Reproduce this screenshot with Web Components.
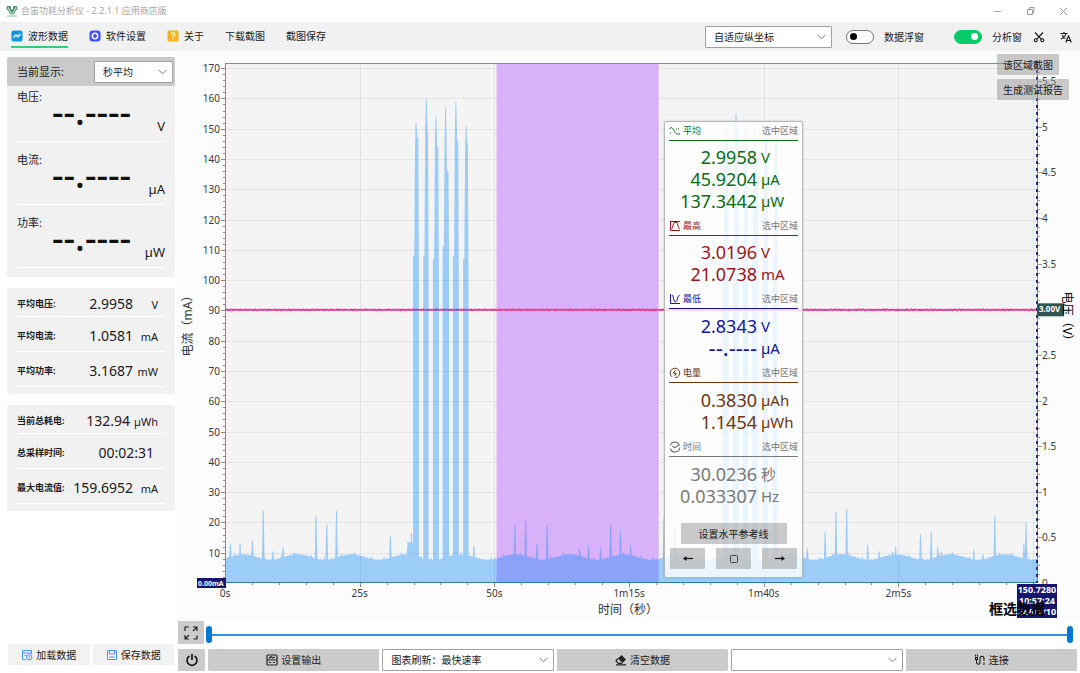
<!DOCTYPE html>
<html lang="zh-CN">
<head>
<meta charset="utf-8">
<title>合宙功耗分析仪</title>
<style>
  body { margin: 0; background: #fff; color: #1a1a1a; font: 10px/14px "Noto Sans", "Noto Sans CJK SC", sans-serif; }
</style>
</head>
<body>
<power-app></power-app>

<script>
const define = (name, html, setup) => {
  const tpl = document.createElement('template');
  tpl.innerHTML = html;
  customElements.define(name, class extends HTMLElement {
    connectedCallback() {
      if (this.shadowRoot) return;
      this.attachShadow({ mode: 'open' }).append(tpl.content.cloneNode(true));
      if (setup) setup(this, this.shadowRoot);
    }
  });
};

/* ---------- basic controls ---------- */

define('flat-button', `
<style>
  :host { display: block; }
  button { display: flex; align-items: center; justify-content: center; gap: 3px; width: 100%; height: 100%; min-height: 21px;
    box-sizing: border-box; margin: 0; padding: var(--pad, 0); border: 0; border-radius: 1px; background: var(--fill, #cbcbcb); color: inherit; font: inherit; white-space: nowrap; }
</style>
<button type="button"><slot></slot></button>`, (el, root) => {
  if (el.getAttribute('label')) root.querySelector('button').setAttribute('aria-label', el.getAttribute('label'));
});

define('drop-down', `
<style>
  :host { display: grid; min-width: 0; }
  select { grid-area: 1/1; appearance: none; width: 100%; height: 22px; box-sizing: border-box; margin: 0; padding: 0 24px 0 8px;
    border: 1px solid #a0a0a0; border-radius: 1px; background: #fff; color: inherit; font: inherit; }
  svg { grid-area: 1/1; align-self: center; justify-self: end; margin-right: 6px; pointer-events: none; }
</style>
<select></select>
<svg width="9" height="6" viewBox="0 0 9 6" fill="none" stroke="#777" stroke-width="1"><path d="M.5 .8 4.500 4.800 8.500 .8"/></svg>`, (el, root) => {
  const s = root.querySelector('select');
  s.setAttribute('aria-label', el.getAttribute('label'));
  s.add(new Option(el.getAttribute('value') || ''));
});

define('toggle-switch', `
<style>
  :host { display: block; }
  label { display: flex; align-items: center; gap: 10px; }
  input { appearance: none; display: flex; align-items: center; width: 28px; height: 14px; box-sizing: border-box; margin: 0; padding: 0 3px;
    border: 1px solid #777; border-radius: 7px; background: #fafafa; }
  input::before { content: ""; width: 7px; height: 7px; border-radius: 50%; background: #000; }
  input:checked { justify-content: flex-end; border-color: #07cb69; background: #07cb69; }
  input:checked::before { background: #fff; }
</style>
<label><input type="checkbox" role="switch"><slot></slot></label>`, (el, root) => {
  root.querySelector('input').checked = el.hasAttribute('on');
});

define('range-slider', `
<style>
  :host { display: grid; align-items: center; background: linear-gradient(#2f8fe0, #2f8fe0) center / calc(100% - 6px) 2px no-repeat; }
  input { grid-area: 1/1; appearance: none; width: 100%; height: 17px; margin: 0; background: none; pointer-events: none; }
  input::-webkit-slider-thumb { appearance: none; width: 6px; height: 17px; border-radius: 3px; background: #0078d7; pointer-events: auto; }
</style>
<input type="range" aria-label="起始" min="0" max="100" value="0">
<input type="range" aria-label="结束" min="0" max="100" value="100">`);

/* ---------- window frame ---------- */

define('window-bar', `
<style>
  :host { display: flex; align-items: center; height: 22px; padding: 0 12px 0 6px; background: #fff; color: #a6a6a6; font-size: 9px; }
  .logo { margin-right: 3px; }
  .caps { display: flex; gap: 24px; margin-left: auto; }
  .caps button { display: block; width: 9px; height: 9px; padding: 0; border: 0; background: none; }
  .caps svg { display: block; }
</style>
<svg class="logo" width="12" height="12" viewBox="0 0 12 12"><path d="M1 1.500h3.500v2L6 6.500 7.500 3.500v-2H11v3H9.800L8 8.800H4L2.200 4.500H1z" fill="#b9d5c6" stroke="#3f8f66" stroke-width=".9"/><path d="M3 1.500 6 7 9 2" fill="none" stroke="#20774a"/><path d="M1 11h10" stroke="#7fbd9d" stroke-width="1"/></svg>
<span>合宙功耗分析仪 - 2.2.1.1 应用商店版</span>
<div class="caps">
  <button aria-label="最小化"><svg width="9" height="9" fill="none" stroke="#aaa"><path d="M1 4.500h7"/></svg></button>
  <button aria-label="还原"><svg width="9" height="9" fill="none" stroke="#999"><path d="M1.500 2.500h5v5h-5zM3.500 2V.5h4.500v5H7"/></svg></button>
  <button aria-label="关闭"><svg width="9" height="9" fill="none" stroke="#999"><path d="m1 1 7 7M8 1 1 8"/></svg></button>
</div>`);

define('tool-bar', `
<style>
  :host { display: flex; align-items: center; justify-content: space-between; height: 29px; padding: 0 8px 0 11px; background: #f1f1f1; }
  nav { display: flex; gap: 21px; }
  nav button { display: flex; align-items: center; gap: 5px; height: 22px; padding: 0; border: 0; border-bottom: 2px solid transparent; background: none; color: inherit; font: inherit; }
  nav .on { border-color: #2fd07a; }
  .right { display: flex; align-items: center; }
  drop-down { width: 127px; margin-right: 14px; }
  toggle-switch + toggle-switch { margin: 0 11px 0 30px; }
  .icon { width: 12px; height: 12px; padding: 0; border: 0; background: none; }
  .icon + .icon { margin-left: 15px; }
  svg { display: block; }
</style>
<nav>
  <button class="on"><svg width="12" height="12" viewBox="0 0 12 12"><rect x=".5" y=".5" width="11" height="11" rx="2" fill="#1296db"/><path d="M2.500 7.500 5 5l1.800 1.800L9.500 4" fill="none" stroke="#fff" stroke-width="1.300"/></svg>波形数据</button>
  <button><svg width="12" height="12" viewBox="0 0 12 12"><rect x=".5" y=".5" width="11" height="11" rx="3" fill="#3d4ff5"/><circle cx="6" cy="6" r="2.700" fill="none" stroke="#fff" stroke-width="1.500"/></svg>软件设置</button>
  <button><svg width="12" height="12" viewBox="0 0 12 12"><rect x=".5" y=".5" width="11" height="11" rx="1" fill="#f3b31c"/><path d="M4.300 4.600c0-2.300 3.500-2.200 3.500-.1C7.800 5.800 6 5.700 6 7.200M6 8.300v1.200" fill="none" stroke="#fff" stroke-width="1.200"/></svg>关于</button>
  <button>下载截图</button>
  <button>截图保存</button>
</nav>
<div class="right">
  <drop-down label="纵坐标" value="自适应纵坐标"></drop-down>
  <toggle-switch>数据浮窗</toggle-switch>
  <toggle-switch on>分析窗</toggle-switch>
  <button class="icon" aria-label="截屏"><svg width="12" height="12" viewBox="0 0 12 12" fill="none" stroke="#111" stroke-width="1.100"><path d="M2 1.500 8.300 8.200M10 1.500 3.700 8.200"/><circle cx="2.700" cy="9.300" r="1.500"/><circle cx="9.300" cy="9.300" r="1.500"/></svg></button>
  <button class="icon" aria-label="语言"><svg width="12" height="12" viewBox="0 0 12 12" fill="none" stroke="#111" stroke-width="1.100"><path d="M.5 2.500h7M4 1v1.500M6 2.500C5.500 5 3.500 7 .8 8M2 4c.8 1.800 2 3 3.500 3.600M5.800 11.500 8.500 5l2.800 6.500M6.700 9.500h3.700"/></svg></button>
</div>`);

/* ---------- left column ---------- */

define('live-reading', `
<style>
  :host { display: flex; flex-direction: column; height: 55px; border-bottom: 1px solid #fff; font-size: 11px; }
  .name { line-height: 22px; }
  .line { display: flex; justify-content: space-between; padding-left: 35px; }
  .value { height: 8px; font-size: 36px; font-weight: 500; line-height: 8px; color: #111; }
  .unit { padding-top: 7px; font-size: 13px; line-height: 22px; }
</style>
<span class="name"><slot></slot>:</span>
<div class="line"><span class="value">--.----</span><span class="unit"></span></div>`, (el, root) => {
  root.querySelector('.unit').textContent = el.getAttribute('unit');
});

define('stat-row', `
<style>
  :host { display: flex; align-items: center; box-sizing: border-box; height: 35px; padding: 3px 7px 0 0; border-bottom: 1px solid #fff; }
  :host(:first-child) { height: 29px; }
  .name { font-size: 9px; font-weight: 700; white-space: nowrap; }
  .value { margin-left: auto; font-size: 14px; }
  .unit { min-width: 21px; margin-left: 4px; padding-top: 2px; font-size: 11px; text-align: right; }
  .unit:empty { min-width: 0; }
</style>
<span class="name"><slot></slot>:</span><span class="value"></span><span class="unit"></span>`, (el, root) => {
  root.querySelector('.value').textContent = el.getAttribute('value');
  root.querySelector('.unit').textContent = el.getAttribute('unit') || '';
});

define('side-panel', `
<style>
  :host { display: flex; flex-direction: column; gap: 11px; padding: 6px 1px 8px 7px; }
  section { border-radius: 2px; background: #f1f1f1; }
  header { display: flex; align-items: center; justify-content: space-between; height: 29px; padding: 0 2px 0 10px; border-radius: 2px; background: #cacaca; font-size: 11px; }
  header drop-down { width: 79px; font-size: 10px; }
  .live { display: flex; flex-direction: column; gap: 7px; padding: 0 10px 9px; }
  .stats { padding: 0 10px 7px; }
  footer { display: grid; grid-template-columns: 1fr 1fr; gap: 3px; margin-top: auto; padding: 0 1px; }
  flat-button { --fill: #f2f2f2; }
</style>
<section>
  <header><span>当前显示:</span><drop-down label="当前显示" value="秒平均"></drop-down></header>
  <div class="live">
    <live-reading unit="V">电压</live-reading>
    <live-reading unit="µA">电流</live-reading>
    <live-reading unit="µW">功率</live-reading>
  </div>
</section>
<section class="stats">
  <stat-row value="2.9958" unit="V">平均电压</stat-row>
  <stat-row value="1.0581" unit="mA">平均电流</stat-row>
  <stat-row value="3.1687" unit="mW">平均功率</stat-row>
</section>
<section class="stats">
  <stat-row value="132.94" unit="µWh">当前总耗电</stat-row>
  <stat-row value="00:02:31">总采样时间</stat-row>
  <stat-row value="159.6952" unit="mA">最大电流值</stat-row>
</section>
<footer>
  <flat-button><svg width="12" height="12" viewBox="0 0 12 12" fill="none" stroke="#4b93f5"><path d="M4.500 10.500h-3v-9h9V5M1.500 4h9M3.500 6.500h2"/><circle cx="8.200" cy="8.300" r="2.700"/><path d="M8.200 7v2.500"/></svg>加载数据</flat-button>
  <flat-button><svg width="12" height="12" viewBox="0 0 12 12" fill="none" stroke="#4b93f5"><path d="M1.500 1.500h9v9h-9zM3.500 1.500v3.500h5V1.500M3.500 8h5"/></svg>保存数据</flat-button>
</footer>`);

/* ---------- waveform chart ---------- */

const DURATION = 150.728;
/* [seconds, mA] of short spikes above the idle current */
const SPIKES = [[1,13],[2.8,13],[5.1,14],[7.1,24],[8.9,10.5],[10.8,12],[16.9,22],[18.9,19.5],[20.7,23.8],[30.7,15.5],[34.6,16.5],
  [46.2,12.3],[53.8,19],[55.8,21],[57.9,13],[59.8,19],[65.8,11.5],[67.5,12],[69.7,11.5],[71.6,19.8],[73.4,17],[75.3,12.3],
  [81.5,21.5],[83.5,19],[108.1,11.5],[111.4,17],[113.4,23.5],[115.4,24.5],[119.3,12.5],[121.4,10.5],[124.5,12],[129.1,16],
  [131.1,17],[132.3,11.8],[133,10.5],[139,11],[140.7,9.5],[142.9,22.5],[148.3,13],[148.7,20]];
/* [start, end, left shoulder, peak, right shoulder] of transmit bursts */
const BURSTS = [[34.9,36,108,152,147],[36.8,37.8,108,160,149],[38.6,39.7,107,154,144],[40.4,41.6,111,157,136],[42.3,43.4,108,159,146],[44.2,45.2,107,151,145],
  [92.4,93.5,108,150,145],[94.3,95.4,108,155,149],[96.1,97.1,107,152,144],[97.8,99,110,150,136],[99.8,100.8,108,151,146],[101.7,102.6,107,150,145]];

const timeLabel = s => s < 60 ? s + 's' : Math.floor(s / 60) + 'm' + (s % 60) + 's';

define('wave-chart', `
<style>
  :host { display: block; background: #fcfcfc; overflow: hidden; }
  svg { display: block; width: 100%; height: 100%; }
  text { font-size: 10px; fill: #3a3a3a; }
  .title { font-size: 12px; fill: #333; }
  .dark { fill: #000; }
  .tag { font-size: 8px; font-weight: 700; fill: #fff; }
  .small { font-size: 7px; }
  .big { font-size: 9px; }
  .mark { font-size: 14px; font-weight: 700; fill: #000; }
</style>
<svg role="img" aria-label="电流与电压波形"></svg>`, (el, root) => {
  const svg = root.querySelector('svg');
  const draw = () => {
    const W = el.clientWidth, H = el.clientHeight;
    if (!W || !H) return;
    const L = 49, R = W - 43, T = 12, B = H - 38;
    const x = s => L + s / DURATION * (R - L);
    const y = mA => B - mA / 171.7 * (B - T);
    const yv = v => B - v / 5.7 * (B - T);
    const line = (x1, y1, x2, y2, c, extra = '') => `<path d="M${x1} ${y1}L${x2} ${y2}" stroke="${c}" ${extra}/>`;
    const h = v => Math.round(v) + .5;
    let o = `<rect x="${L}" y="${T}" width="${R - L}" height="${B - T}" fill="#f4f4f4"/>`;
    for (let m = 10; m <= 170; m += 10) o += line(L, h(y(m)), R, h(y(m)), '#e4e4e4');
    for (let s = 25; s <= 150; s += 25) o += line(h(x(s)), T, h(x(s)), B, '#e2e2e2');
    o += `<rect x="${x(50.4)}" y="${T}" width="${x(80.5) - x(50.4)}" height="${B - T}" fill="#d9b1f8"/>`;

    /* voltage trace: a nearly flat 3 V line with ripple */
    let v = '';
    for (let p = L; p <= R; p += 2) v += `${v ? 'L' : 'M'}${p} ${y(90.2) + Math.sin(p * 1.7) * Math.sin(p * .13) * .6}`;
    o += `<path d="${v}" fill="none" stroke="#f5409a" stroke-width="2"/>`;
    o += line(L, h(y(90.3)) - 1, R, h(y(90.3)) - 1, '#555', 'stroke-dasharray="3 4" stroke-opacity=".5"');

    /* current trace as a filled area */
    const idle = s => 8.6 - .9 * Math.cos((s - 8.4) / 10.1 * 6.283) + .3 * Math.sin(s * 13) * Math.sin(s * 2.1);
    let d = `M${L} ${B}`;
    for (let s = 0; s <= DURATION; s += .15) {
      if (BURSTS.some(b => s > b[0] - .1 && s < b[1] + .1)) continue;
      d += `L${x(s).toFixed(1)} ${y(idle(s) + (s > 33.8 && s < 34.9 ? 4 : 0) + (Math.sin(s * 91.7) > .985 ? 1 : 0)).toFixed(1)}`;
    }
    d += `L${R} ${y(9)}L${R} ${B}Z`;
    for (const [s, m] of SPIKES) d += `M${x(s) - 1.4} ${y(6)}L${x(s) - .5} ${y(m)}H${x(s) + .5}L${x(s) + 1.400} ${y(6)}Z`;
    for (const [a, b, l, p, r] of BURSTS) {
      const xa = x(a), xb = x(b);
      d += `M${xa} ${B}V${y(l)}H${xa + 1.2}L${xa + 2} ${y(p - 9)}L${xa + 2.600} ${y(p)}H${xa + 3.400}L${xa + 4.300} ${y(r)}H${xb - .6}L${xb} ${y(l - 10)}V${B}Z`;
    }
    o += `<path d="${d}" fill="#0084ff" fill-opacity=".36"/>`;

    /* frame and ticks */
    o += line(L, T + .5, R, T + .5, '#5f9aa8') + line(L + .5, T, L + .5, B, '#5f9aa8') + line(L, B - .5, R, B - .5, '#2f7fa0') + line(R + .5, T, R + .5, B, '#5f9aa8');
    o += line(R, T, R, B, '#28287e', 'stroke-width="2" stroke-dasharray="3 4"');
    for (let m = 2; m <= 170; m += 2) o += line(m % 10 ? L - 2 : L - 4, h(y(m)), L, h(y(m)), '#888');
    for (let s = 5; s <= 150; s += 5) o += line(h(x(s)), B, h(x(s)), s % 25 ? B + 2 : B + 4, '#888');
    for (let k = 1; k <= 56; k++) o += line(R + 1, h(yv(k / 10)), k % 5 ? R + 3 : R + 5, h(yv(k / 10)), '#999');
    for (let m = 10; m <= 170; m += 10) o += `<text x="${L - 5}" y="${y(m) + 4}" text-anchor="end">${m}</text>`;
    for (let s = 0; s <= 125; s += 25) o += `<text x="${x(s)}" y="${B + 14}" text-anchor="middle">${timeLabel(s)}</text>`;
    for (let k = 0; k <= 11; k++) if (k !== 6) o += `<text x="${R + 5}" y="${yv(k / 2) + 4}">${k / 2}</text>`;

    const mid = (T + B) / 2;
    o += `<text class="title" text-anchor="middle" transform="translate(16 ${mid}) rotate(-90)">电流（mA）</text>`;
    o += `<text class="title" text-anchor="middle" x="${(L + R) / 2 - 3}" y="${B + 31}">时间（秒）</text>`;
    o += `<rect x="${R}" y="${yv(3) - 6}" width="27" height="13" fill="#2f5550"/><text class="tag" x="${R + 2}" y="${yv(3) + 3}">3.00V</text>`;
    o += `<text class="title dark" text-anchor="middle" transform="translate(${R + 26} ${mid - 4}) rotate(90)">电压（V）</text>`;
    o += `<rect x="21" y="${B - 5}" width="29" height="10" fill="#16166b"/><text class="tag small" x="22" y="${B + 3}">0.00mA</text>`;
    o += `<rect x="${R - 20}" y="${B + 1}" width="40" height="34" fill="#16166b"/>`;
    ['150.7280', '10:57:24', '24/07/10'].forEach((t, i) => { o += `<text class="tag big" text-anchor="middle" x="${R}" y="${B + 10 + i * 11}">${t}</text>`; });
    o += `<text class="mark" x="${R - 48}" y="${B + 31}">框选数据</text>`;
    svg.setAttribute('viewBox', `0 0 ${W} ${H}`);
    svg.innerHTML = o;
  };
  draw();
  new ResizeObserver(draw).observe(el);
});

/* ---------- floating analysis window ---------- */

define('analysis-group', `
<style>
  :host { display: block; color: var(--tone); }
  h3 { display: flex; align-items: center; gap: 2px; height: 18px; margin: 0; border-bottom: 1px solid var(--tone); font-size: 9px; font-weight: 400; }
  h3 small { margin-left: auto; color: #777; font-size: 9px; }
  dl { display: grid; grid-template-columns: 88px 1fr; column-gap: 4px; margin: 0; padding: 5px 0; line-height: 22px; }
  :host(:nth-of-type(n+3)) dl { padding-top: 6px; }
  dt { height: 22px; font-size: 18px; text-align: right; white-space: nowrap; }
  dt.blank { font-size: 22px; line-height: 20px; }
  dd { height: 22px; margin: 0; font-size: 15px; white-space: nowrap; }
</style>
<h3><slot name="icon"></slot><slot></slot><small>选中区域</small></h3>
<dl></dl>`, (el, root) => {
  root.querySelector('dl').innerHTML = el.getAttribute('values').split('|').map(p => {
    const [n, u] = p.split(' ');
    return `<dt${n[0] === '-' ? ' class="blank"' : ''}>${n}</dt><dd>${u}</dd>`;
  }).join('');
});

define('analysis-window', `
<style>
  :host { display: block; box-sizing: border-box; width: 139px; padding: 0 4px 8px; border: 1px solid #b8b8b8; border-radius: 2px; background: rgba(255,255,255,.8); box-shadow: 0 0 2px rgba(0,0,0,.25); }
  .wide { width: 106px; margin: 11px auto 4px; }
  .row { display: flex; justify-content: center; gap: 11px; }
  .row flat-button { width: 35px; }
  flat-button { --fill: rgba(150,150,150,.5); }
  svg { display: block; }
</style>
<analysis-group style="--tone:#0b6b14" values="2.9958 V|45.9204 µA|137.3442 µW"><svg slot="icon" width="12" height="12" viewBox="0 0 12 12" fill="none" stroke="currentColor" stroke-width="1"><path d="M.5 4C2 1.500 3.500 2.500 5 5.500s3 4.500 6 3"/><path d="M1 8h2M7 4h4" stroke-dasharray="1 1"/></svg>平均</analysis-group>
<analysis-group style="--tone:#9a1519" values="3.0196 V|21.0738 mA"><svg slot="icon" width="12" height="12" viewBox="0 0 12 12" fill="none" stroke="currentColor" stroke-width="1"><path d="M1.500 1v9.500H11M2.500 9C4.500 7 4 3 5 2.500h3C9 3 8.500 7 10.500 9M2 1.500h9"/></svg>最高</analysis-group>
<analysis-group style="--tone:#14149a" values="2.8343 V|--.---- µA"><svg slot="icon" width="12" height="12" viewBox="0 0 12 12" fill="none" stroke="currentColor" stroke-width="1"><path d="M1.500 1v9.500H11M3 2C5 4 4.500 8 5.500 8.500h1.500C8.500 8 8 4 10.500 2"/></svg>最低</analysis-group>
<analysis-group style="--tone:#6b3510" values="0.3830 µAh|1.1454 µWh"><svg slot="icon" width="12" height="12" viewBox="0 0 12 12" fill="none" stroke="currentColor" stroke-width="1"><path d="M3 9.800A4.800 4.800 0 1 1 6 10.800"/><path d="M6.500 3 4.300 6.300h3L5.500 9"/></svg>电量</analysis-group>
<analysis-group style="--tone:#787878" values="30.0236 秒|0.033307 Hz"><svg slot="icon" width="12" height="12" viewBox="0 0 12 12" fill="none" stroke="currentColor" stroke-width="1.200"><path d="M1.300 4.500A4.800 4.800 0 0 1 10.500 4.500M10.700 6.500A4.800 4.800 0 0 1 1.300 7.500M3.500 5l2 1.800L9.500 4.300"/></svg>时间</analysis-group>
<flat-button class="wide">设置水平参考线</flat-button>
<div class="row">
  <flat-button label="左移"><svg width="10" height="7" viewBox="0 0 10 7"><path d="M0 3.500 3.500 1v5z" fill="#111"/><path d="M2 3.500h8" stroke="#111" stroke-width="1.200"/></svg></flat-button>
  <flat-button label="停止"><svg width="8" height="8" viewBox="0 0 8 8"><rect x=".5" y=".5" width="7" height="7" rx="1" fill="none" stroke="#444"/></svg></flat-button>
  <flat-button label="右移"><svg width="10" height="7" viewBox="0 0 10 7"><path d="M10 3.500 6.500 1v5z" fill="#111"/><path d="M0 3.500h8" stroke="#111" stroke-width="1.200"/></svg></flat-button>
</div>`);

/* ---------- bottom controls ---------- */

define('control-deck', `
<style>
  :host { display: block; padding: 0 3px 2px 2px; }
  .time { display: grid; grid-template-columns: 26px 1fr; gap: 2px; height: 23px; margin-bottom: 5px; }
  range-slider { height: 17px; align-self: end; margin: 0 4px 1px 0; }
  .row { display: grid; grid-template-columns: 27px repeat(5, 1fr); gap: 3px; height: 22px; }
  svg { display: block; }
</style>
<div class="time">
  <flat-button label="全屏"><svg width="14" height="14" viewBox="0 0 14 14" fill="none" stroke="#222" stroke-width="1.200"><path d="M1 5V1h4M9 1h4v4M13 1 9 5M1 9v4h4M1 13l4-4M13 9.500V13H9.500"/></svg></flat-button>
  <range-slider></range-slider>
</div>
<div class="row">
  <flat-button label="电源"><svg width="14" height="14" viewBox="0 0 14 14" fill="none" stroke="#111" stroke-width="1.600"><path d="M4.500 3A5 5 0 1 0 9.500 3M7 1v6"/></svg></flat-button>
  <flat-button><svg width="12" height="12" viewBox="0 0 12 12" fill="none" stroke="#222" stroke-width="1.200"><rect x="1" y="1" width="10" height="10" rx="1"/><path d="M1 6h10M3 4.500 5 2.500l1.500 1.500L9 3M3 8.500h2M7 8.500h2"/></svg>设置输出</flat-button>
  <drop-down label="图表刷新" value="图表刷新：最快速率"></drop-down>
  <flat-button><svg width="12" height="12" viewBox="0 0 12 12"><path d="M6.500 1 11 5.500 7.500 9 3 4.500z" fill="#222"/><path d="M3 4.500 1 6.800 3.300 9.300h4M1 10.800h10" fill="none" stroke="#222" stroke-width="1.200"/></svg>清空数据</flat-button>
  <drop-down label="设备" value=""></drop-down>
  <flat-button><svg width="12" height="12" viewBox="0 0 12 12" fill="none" stroke="#222" stroke-width="1.100"><path d="M1.500 .5v2M3.500 .5v2M1.500 3.500h2v2h-2zM2.500 5.500V8c0 3 3.500 3 3.500 0V4.500c0-3 4-3 4 0V7M10 8.500V11"/></svg>连接</flat-button>
</div>`);

/* ---------- page ---------- */

define('power-app', `
<style>
  :host { display: flex; flex-direction: column; height: 100vh; min-height: 640px; }
  main { flex: 1; display: grid; grid-template-columns: 176px minmax(0, 1fr); min-height: 0; }
  .work { display: flex; flex-direction: column; min-height: 0; }
  .stage { flex: 1; display: grid; position: relative; min-height: 0; }
  wave-chart { min-height: 0; min-width: 0; }
  .actions { position: absolute; top: 3px; right: 11px; display: flex; flex-direction: column; align-items: flex-start; gap: 4px; }
  .actions flat-button { --fill: rgba(150,150,150,.5); --pad: 0 6px; }
  analysis-window { position: absolute; top: 70px; right: 277px; }
</style>
<window-bar></window-bar>
<tool-bar></tool-bar>
<main>
  <side-panel></side-panel>
  <div class="work">
    <div class="stage">
      <wave-chart></wave-chart>
      <analysis-window></analysis-window>
      <div class="actions">
        <flat-button>该区域截图</flat-button>
        <flat-button>生成测试报告</flat-button>
      </div>
    </div>
    <control-deck></control-deck>
  </div>
</main>`);
</script>
</body>
</html>
